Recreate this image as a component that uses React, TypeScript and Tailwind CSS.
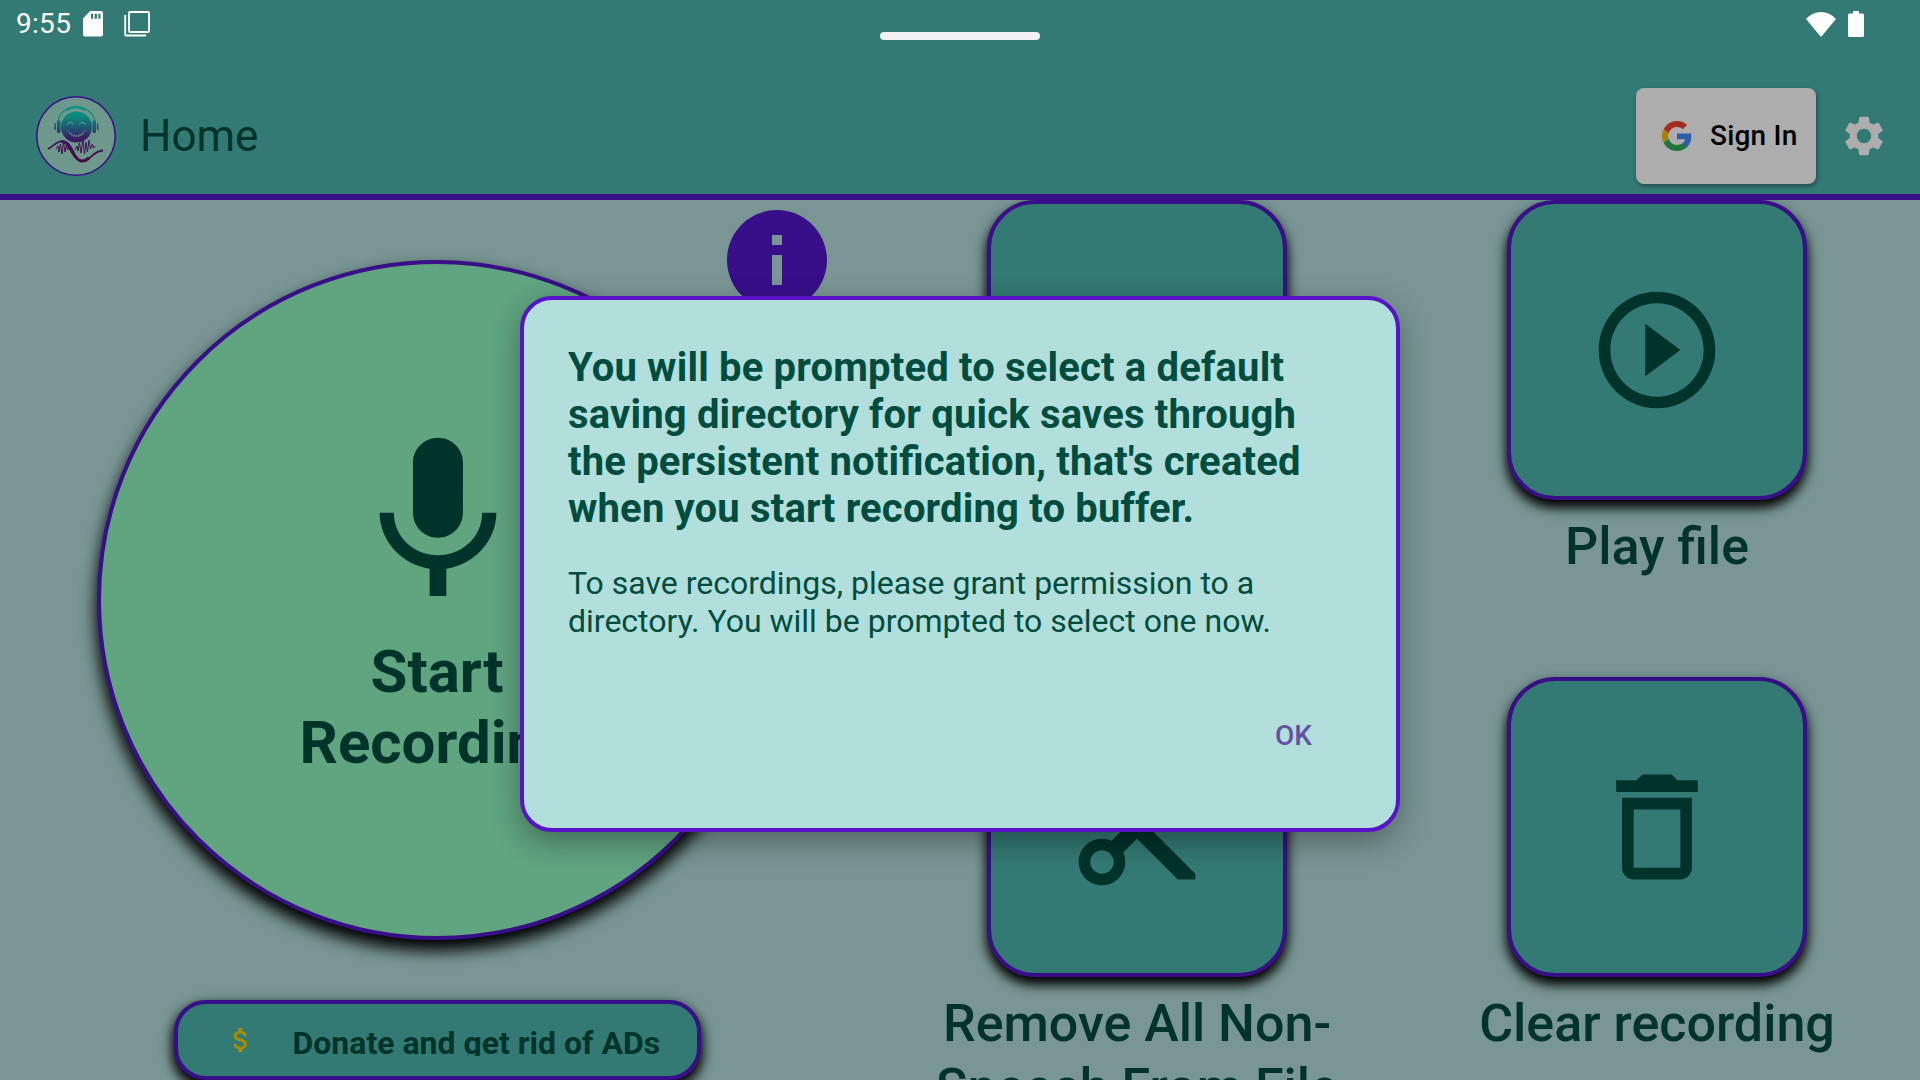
import React from "react";

type TileProps = { label: string; path?: string };

const PLAY =
  "M10 16.5l6-4.5-6-4.5v9zM12 2C6.48 2 2 6.48 2 12s4.48 10 10 10 10-4.48 10-10S17.52 2 12 2zm0 18c-4.41 0-8-3.59-8-8s3.59-8 8-8 8 3.59 8 8-3.59 8-8 8z";
const CUT =
  "M9.64 7.64c.23-.5.36-1.05.36-1.64 0-2.21-1.79-4-4-4S2 3.79 2 6s1.79 4 4 4c.59 0 1.14-.13 1.64-.36L10 12l-2.36 2.36C7.14 14.13 6.59 14 6 14c-2.21 0-4 1.79-4 4s1.79 4 4 4 4-1.79 4-4c0-.59-.13-1.14-.36-1.64L12 14l7 7h3v-1L9.64 7.64zM6 8c-1.1 0-2-.89-2-2s.9-2 2-2 2 .89 2 2-.9 2-2 2zm0 12c-1.1 0-2-.89-2-2s.9-2 2-2 2 .89 2 2-.9 2-2 2zm6-7.5c-.28 0-.5-.22-.5-.5s.22-.5.5-.5.5.22.5.5-.22.5-.5.5zM19 3l-6 6 2 2 7-7V3z";
const TRASH =
  "M6 19c0 1.1.9 2 2 2h8c1.1 0 2-.9 2-2V7H6v12zM8 9h8v10H8V9zm7.5-5l-1-1h-5l-1 1H5v2h14V4h-3.5z";
const SAVE =
  "M17 3H5c-1.11 0-2 .9-2 2v14c0 1.1.89 2 2 2h14c1.1 0 2-.9 2-2V7l-4-4zm2 16H5V5h11.17L19 7.83V19zm-7-7c-1.66 0-3 1.34-3 3s1.34 3 3 3 3-1.34 3-3-1.34-3-3-3zM6 6h9v4H6z";
const MIC =
  "M12 14c1.66 0 2.99-1.34 2.99-3L15 5c0-1.66-1.34-3-3-3S9 3.34 9 5v6c0 1.66 1.34 3 3 3zm5.3-3c0 3-2.54 5.1-5.3 5.1S6.7 14 6.7 11H5c0 3.41 2.72 6.23 6 6.72V21h2v-3.28c3.28-.48 6-3.3 6-6.72h-1.7z";
const MONEY =
  "M11.8 10.9c-2.27-.59-3-1.2-3-2.15 0-1.09 1.01-1.85 2.7-1.85 1.78 0 2.44.85 2.5 2.1h2.21c-.07-1.72-1.12-3.3-3.21-3.81V3h-3v2.16c-1.94.42-3.5 1.68-3.5 3.61 0 2.31 1.91 3.46 4.7 4.13 2.5.6 3 1.48 3 2.41 0 .69-.49 1.79-2.7 1.79-2.06 0-2.87-.92-2.98-2.1h-2.2c.12 2.19 1.76 3.42 3.68 3.83V21h3v-2.15c1.95-.37 3.5-1.5 3.5-3.55 0-2.84-2.43-3.81-4.7-4.4z";
const GEAR =
  "M19.14 12.94c.04-.3.06-.61.06-.94 0-.32-.02-.64-.07-.94l2.03-1.58c.18-.14.23-.41.12-.61l-1.92-3.32c-.12-.22-.37-.29-.59-.22l-2.39.96c-.5-.38-1.03-.7-1.62-.94l-.36-2.54c-.04-.24-.24-.41-.48-.41h-3.84c-.24 0-.43.17-.47.41l-.36 2.54c-.59.24-1.13.57-1.62.94l-2.39-.96c-.22-.08-.47 0-.59.22L2.74 8.87c-.12.21-.08.47.12.61l2.03 1.58c-.05.3-.09.63-.09.94s.02.64.07.94l-2.03 1.58c-.18.14-.23.41-.12.61l1.92 3.32c.12.22.37.29.59.22l2.39-.96c.5.38 1.03.7 1.62.94l.36 2.54c.05.24.24.41.48.41h3.84c.24 0 .44-.17.47-.41l.36-2.54c.59-.24 1.13-.56 1.62-.94l2.39.96c.22.08.47 0 .59-.22l1.92-3.32c.12-.22.07-.47-.12-.61l-2.01-1.58zM12 15.6c-1.98 0-3.6-1.62-3.6-3.6s1.62-3.6 3.6-3.6 3.6 1.62 3.6 3.6-1.62 3.6-3.6 3.6z";

function StatusBar() {
  return (
    <div className="relative flex h-12 shrink-0 items-center justify-between pl-4 pr-14 text-white">
      <div className="flex items-center">
        <span className="w-[67px] whitespace-nowrap text-[28px] leading-none tracking-[0.3px]">9:55</span>
        <svg className="h-[26px] w-5" viewBox="0 0 20 26">
          <path
            fillRule="evenodd"
            fill="currentColor"
            d="M7.2 0H18a2 2 0 0 1 2 2v21.500a2 2 0 0 1-2 2H2a2 2 0 0 1-2-2V7.500zM8 2.700v5h2.200v-5zM11.700 2.700v5h2.200v-5zM15.300 2.700v5h2.200v-5z"
          />
        </svg>
        <svg className="ml-[21px] h-[26px] w-[26px]" viewBox="0 0 26 26" fill="none" stroke="currentColor">
          <rect x="5" y="1" width="20" height="20" rx="1" strokeWidth="1.800" />
          <path d="M1.200 4v19.500a1 1 0 0 0 1 1H22" strokeWidth="1.800" />
        </svg>
      </div>
      <div className="flex items-center gap-3">
        <svg className="h-[25px] w-[30px]" viewBox="0 0 30 25">
          <path fill="currentColor" d="M15 25L0 7Q6.500 0 15 0t15 7z" />
        </svg>
        <svg className="h-[26px] w-4" viewBox="0 0 16 26">
          <path fill="currentColor" d="M5 0h6v2.500h3.500A1.500 1.500 0 0 1 16 4v20.500a1.500 1.500 0 0 1-1.500 1.500h-13A1.500 1.500 0 0 1 0 24.500V4a1.500 1.500 0 0 1 1.500-1.500H5z" />
        </svg>
      </div>
      <div className="absolute left-[880px] top-8 h-2 w-40 rounded-full bg-[#f1f0f4]" />
    </div>
  );
}

function Avatar() {
  return (
    <svg className="h-20 w-20" viewBox="0 0 80 80">
      <defs>
        <linearGradient id="face" gradientUnits="userSpaceOnUse" x1="0" y1="10" x2="0" y2="62">
          <stop offset="0" stopColor="#069580" />
          <stop offset="0.200" stopColor="#0c8a7c" />
          <stop offset="0.400" stopColor="#1f5a72" />
          <stop offset="0.620" stopColor="#3a1c66" />
          <stop offset="0.800" stopColor="#450f50" />
          <stop offset="1" stopColor="#480a45" />
        </linearGradient>
      </defs>
      <circle cx="40" cy="40" r="39.200" fill="#6f988c" stroke="#380e89" strokeWidth="1.500" />
      <circle cx="40.500" cy="31" r="15.500" fill="url(#face)" />
      <g fill="none" stroke="url(#face)">
        <path d="M22 26C24 6 56 6 59 26" strokeWidth="1.200" />
        <path d="M30 14Q40 8 50 14" strokeWidth="2.500" />
        <path d="M12 53C20 48 24 43 30 46C38 50 37 64 46 65C54 66 56 55 67 54.500" strokeWidth="1.800" />
        <path d="M25 45.500C34 44 36 63 45 65Q49 65.500 53 62" strokeWidth="3" />
        <path d="M20 53l2-3 1 6 1.500-8 1.500 10 1.500-12 1.500 10 1.500-7 1 5 2-2M39 54l2-4 1 5 1.500-8 1.500 10 2-14 1.500 15 1.500-12 1.500 10 1.500-12 1.500 9 2-5 1 4 2-2" strokeWidth="1" />
      </g>
      <g fill="url(#face)">
        <rect x="21" y="24" width="3.500" height="13" rx="1.500" />
        <rect x="18.300" y="27" width="1.800" height="7" rx="0.900" />
        <rect x="56.500" y="24" width="3.500" height="13" rx="1.500" />
        <rect x="60.800" y="27" width="1.800" height="7" rx="0.900" />
      </g>
      <g fill="none" stroke="#7aa09c" strokeWidth="1">
        <path d="M31 28.500q3.500-4 6.500 0M43 28.500q3.500-4 6.500 0" />
        <path d="M31.500 34q9 11 18 0M33 37q7.500 7 15 0" strokeDasharray="1.500 1" />
      </g>
    </svg>
  );
}

function GoogleLogo() {
  return (
    <svg className="h-[30px] w-[30px]" viewBox="0 0 48 48">
      <path fill="#a22d25" d="M24 9.500c3.540 0 6.710 1.220 9.210 3.600l6.850-6.850C35.900 2.380 30.470 0 24 0 14.620 0 6.510 5.380 2.560 13.220l7.980 6.190C12.430 13.720 17.740 9.500 24 9.500z" />
      <path fill="#2d5ca8" d="M46.980 24.550c0-1.570-.15-3.090-.38-4.550H24v9.020h12.940c-.58 2.960-2.260 5.480-4.780 7.180l7.730 6c4.510-4.180 7.090-10.360 7.090-17.650z" />
      <path fill="#ab8003" d="M10.530 28.590c-.48-1.450-.76-2.990-.76-4.590s.27-3.140.76-4.590l-7.980-6.190C.92 16.460 0 20.120 0 24c0 3.880.92 7.540 2.560 10.780l7.970-6.190z" />
      <path fill="#247539" d="M24 48c6.480 0 11.930-2.130 15.890-5.810l-7.730-6c-2.150 1.450-4.920 2.300-8.160 2.300-6.260 0-11.570-4.220-13.470-9.910l-7.980 6.190C6.510 42.620 14.620 48 24 48z" />
    </svg>
  );
}

function Tile({ label, path }: TileProps) {
  return (
    <div className="flex h-[477px] w-[520px] shrink-0 flex-col items-center">
      <button className="flex h-[300px] w-[300px] shrink-0 items-center justify-center rounded-[48px] border-4 border-[#380e89] bg-[#347a74] shadow-[0_7px_12px_1px_#000000]">
        <svg className="h-[140px] w-[140px]" viewBox="0 0 24 24">
          <path fill="#00332a" d={path} />
        </svg>
      </button>
      <span className="mt-[15px] w-[420px] text-center text-[52px] font-medium leading-[64px]">{label}</span>
    </div>
  );
}

export default function App() {
  return (
    <div className="relative h-[1080px] w-[1920px] overflow-hidden bg-[#799694] font-['Roboto',sans-serif] text-[#00332a]">
      <header className="flex h-[200px] flex-col border-b-[6px] border-[#380e89] bg-[#347a74]">
        <StatusBar />
        <div className="mt-10 flex h-24 items-center pl-9 pr-8">
          <Avatar />
          <h1 className="ml-6 text-[44px] leading-none">Home</h1>
          <button className="ml-auto flex h-24 w-[180px] items-center rounded-lg bg-[#adadad] pl-[26px] text-[28px] font-medium text-black shadow-[1px_2px_5px_#00000066]">
            <GoogleLogo />
            <span className="ml-[18px] whitespace-nowrap tracking-[0.2px]">Sign In</span>
          </button>
          <svg className="ml-6 h-12 w-12" viewBox="0 0 24 24">
            <path fill="#adadad" d={GEAR} />
          </svg>
        </div>
      </header>

      <main className="flex h-[880px] overflow-hidden">
        <section className="relative mr-[3px] flex w-[874px] shrink-0 flex-col items-center pt-[60px]">
          <button className="flex h-[680px] w-[680px] shrink-0 flex-col items-center rounded-full border-4 border-[#380e89] bg-[#60a480] pt-[157px] shadow-[0_10px_16px_1px_#000000]">
            <svg className="ml-px h-[200px] w-[200px] shrink-0" viewBox="0 0 24 24">
              <path fill="#00332a" d={MIC} />
            </svg>
            <span className="mt-[15px] w-[300px] text-center text-[60px] font-bold leading-[71px]">Start Recording</span>
          </button>
          <button className="mt-[60px] flex h-20 w-[527px] shrink-0 items-center rounded-[32px] border-4 border-[#380e89] bg-[#347a74] pl-[47px] shadow-[0_6px_12px_2px_#000000]">
            <svg className="mr-9 h-8 w-8" viewBox="0 0 24 24">
              <path fill="#a98e00" d={MONEY} />
            </svg>
            <span className="h-8 overflow-hidden whitespace-nowrap text-[32px] font-bold leading-[38px]">
              Donate and get rid of ADs
            </span>
          </button>
          <svg className="absolute left-[717px] top-0 h-[120px] w-[120px]" viewBox="0 0 24 24">
            <path
              fill="#380e89"
              d="M12 2C6.480 2 2 6.480 2 12s4.480 10 10 10 10-4.480 10-10S17.520 2 12 2zm1 15h-2v-6h2v6zm0-8h-2V7h2v2z"
            />
          </svg>
        </section>
        <section className="grid w-[1040px] shrink-0 grid-cols-2 content-start">
          <Tile label="Save" path={SAVE} />
          <Tile label="Play file" path={PLAY} />
          <Tile label="Remove All Non-Speech From File" path={CUT} />
          <Tile label="Clear recording" path={TRASH} />
        </section>
      </main>

      <div
        role="dialog"
        className="absolute left-[520px] top-[296px] flex h-[536px] w-[880px] flex-col rounded-[32px] border-4 border-[#5614c9] bg-[#b2dfdb] px-11 pt-[44px] text-[#004d40] shadow-[0_10px_30px_#00000055]"
      >
        <h2 className="whitespace-nowrap text-[40px] font-bold leading-[47px] tracking-[0.17px] [font-feature-settings:'liga'_1]">
          You will be prompted to select a default
          <br />
          saving directory for quick saves through
          <br />
          the persistent notification, that's created
          <br />
          when you start recording to buffer.
        </h2>
        <p className="mt-8 whitespace-nowrap text-[32px] leading-[38px]">
          To save recordings, please grant permission to a
          <br />
          directory. You will be prompted to select one now.
        </p>
        <button className="mr-10 mt-20 self-end text-[28px] font-medium leading-8 text-[#6750a4]">OK</button>
      </div>
    </div>
  );
}
